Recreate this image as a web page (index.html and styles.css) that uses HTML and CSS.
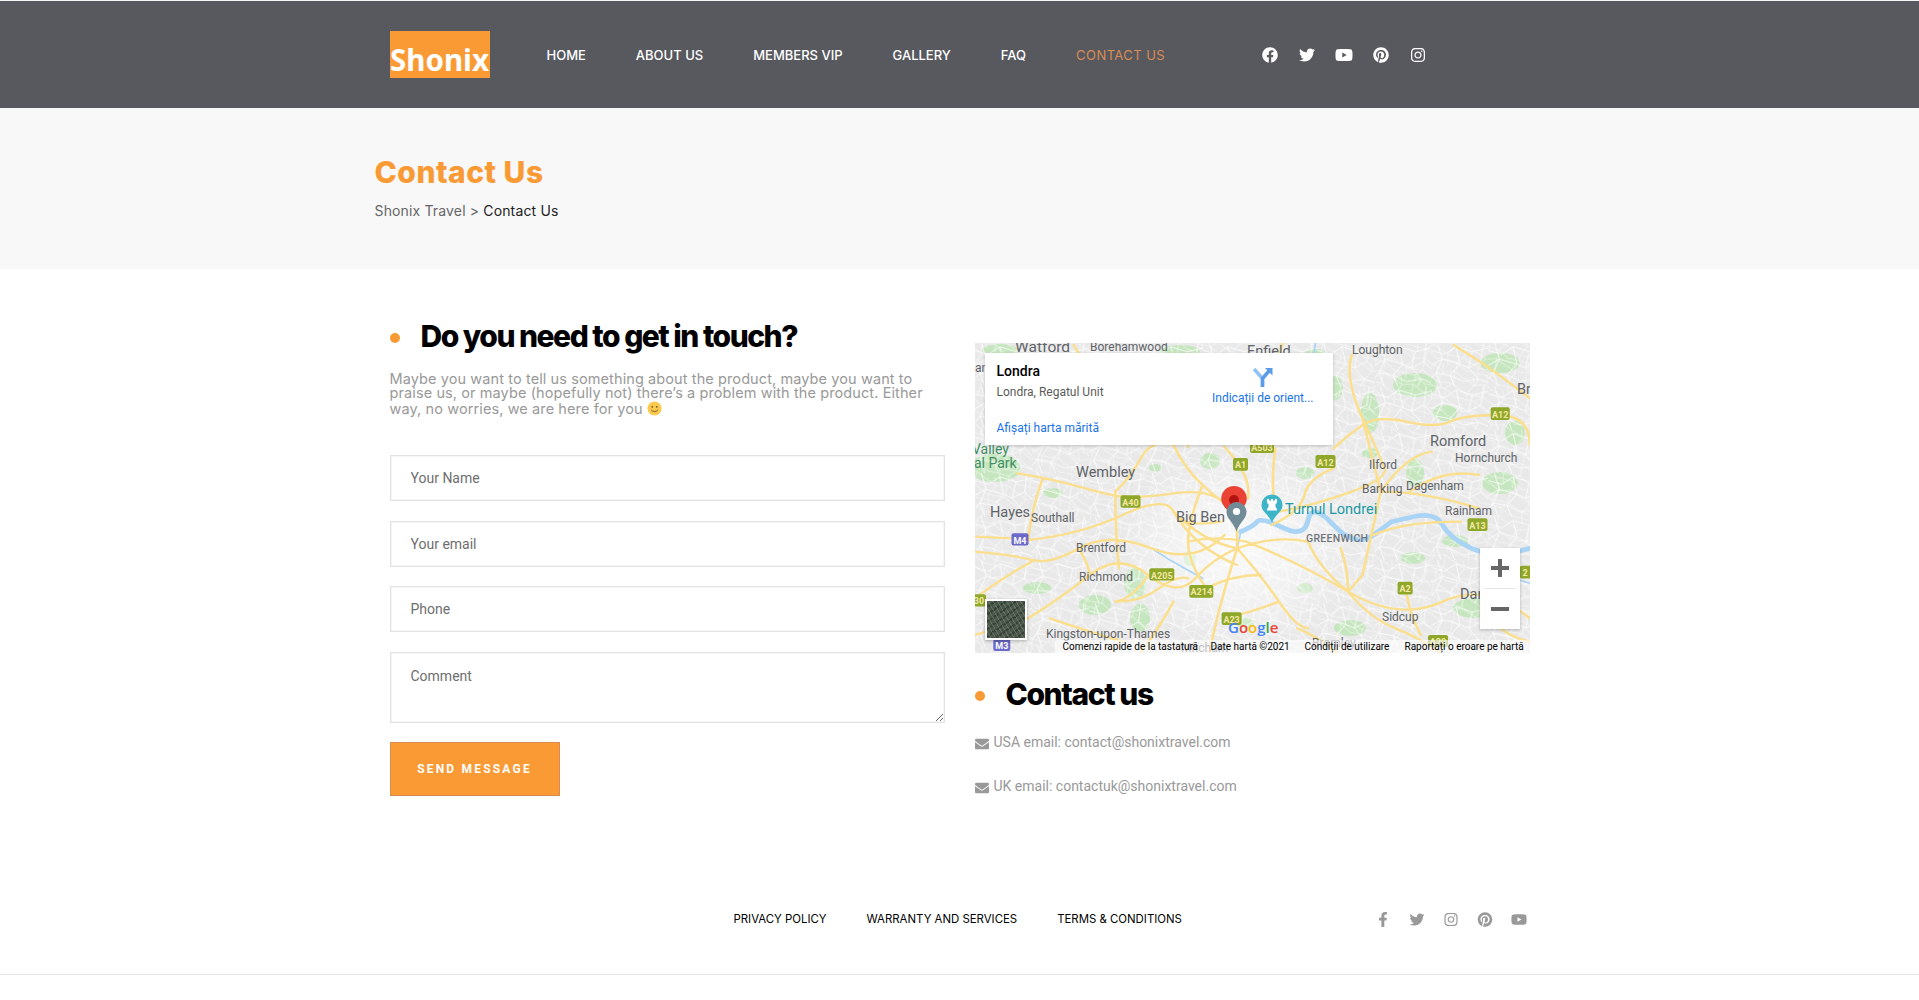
FILE: index.html
```html
<!DOCTYPE html>
<html lang="en">
<head>
    <meta charset="UTF-8">
    <meta name="viewport" content="width=device-width, initial-scale=1.0">
    <title>Contact Us - Shonix Travel</title>
    <link rel="stylesheet" href="styles.css">
</head>
<body>

    <!-- Icon sprite -->
    <svg class="sprite" aria-hidden="true">
        <symbol id="i-facebook" viewBox="0 0 512 512"><path d="M504 256C504 119 393 8 256 8S8 119 8 256c0 123.78 90.69 226.38 209.25 245V327.69h-63V256h63v-54.64c0-62.15 37-96.48 93.67-96.48 27.14 0 55.52 4.84 55.52 4.84v61h-31.28c-30.8 0-40.41 19.12-40.41 38.73V256h68.78l-11 71.69h-57.78V501C413.31 482.38 504 379.78 504 256z"/></symbol>
        <symbol id="i-facebook-f" viewBox="0 0 320 512"><path d="M279.14 288l14.22-92.66h-88.91v-60.13c0-25.35 12.42-50.06 52.24-50.06h40.42V6.26S260.43 0 225.36 0c-73.22 0-121.08 44.38-121.08 124.72v70.62H22.89V288h81.39v224h100.17V288z"/></symbol>
        <symbol id="i-twitter" viewBox="0 0 512 512"><path d="M459.37 151.716c.325 4.548.325 9.097.325 13.645 0 138.72-105.583 298.558-298.558 298.558-59.452 0-114.68-17.219-161.137-47.106 8.447.974 16.568 1.299 25.34 1.299 49.055 0 94.213-16.568 130.274-44.832-46.132-.975-84.792-31.188-98.112-72.772 6.498.974 12.995 1.624 19.818 1.624 9.421 0 18.843-1.3 27.614-3.573-48.081-9.747-84.143-51.98-84.143-102.985v-1.299c13.969 7.797 30.214 12.67 47.431 13.319-28.264-18.843-46.781-51.005-46.781-87.391 0-19.492 5.197-37.36 14.294-52.954 51.655 63.675 129.3 105.258 216.365 109.807-1.624-7.797-2.599-15.918-2.599-24.04 0-57.828 46.782-104.934 104.934-104.934 30.213 0 57.502 12.67 76.67 33.137 23.715-4.548 46.456-13.645 66.599-25.666-7.798 24.366-24.366 44.833-46.132 57.827 21.117-2.273 41.584-8.122 60.426-16.243-14.292 20.791-32.161 39.308-52.628 54.253z"/></symbol>
        <symbol id="i-youtube" viewBox="0 0 576 512"><path d="M549.655 124.083c-6.281-23.65-24.787-42.276-48.284-48.597C458.781 64 288 64 288 64S117.22 64 74.629 75.486c-23.497 6.322-42.003 24.947-48.284 48.597-11.412 42.867-11.412 132.305-11.412 132.305s0 89.438 11.412 132.305c6.281 23.65 24.787 41.5 48.284 47.821C117.22 448 288 448 288 448s170.78 0 213.371-11.486c23.497-6.321 42.003-24.171 48.284-47.821 11.412-42.867 11.412-132.305 11.412-132.305s0-89.438-11.412-132.305zm-317.51 213.508V175.185l142.739 81.205-142.739 81.201z"/></symbol>
        <symbol id="i-pinterest" viewBox="0 0 496 512"><path d="M496 256c0 137-111 248-248 248-25.6 0-50.2-3.9-73.4-11.1 10.1-16.5 25.2-43.5 30.8-65 3-11.6 15.4-59 15.4-59 8.1 15.4 31.7 28.5 56.8 28.5 74.8 0 128.7-68.8 128.7-154.3 0-81.9-66.9-143.2-152.9-143.2-107 0-163.9 71.8-163.9 150.1 0 36.4 19.4 81.7 50.3 96.1 4.7 2.2 7.2 1.2 8.3-3.3.8-3.4 5-20.3 6.9-28.1.6-2.5.3-4.7-1.7-7.1-10.1-12.5-18.3-35.3-18.3-56.6 0-54.7 41.4-107.6 112-107.6 60.9 0 103.6 41.5 103.6 100.9 0 67.1-33.9 113.6-78 113.6-24.3 0-42.6-20.1-36.7-44.8 7-29.5 20.5-61.3 20.5-82.6 0-19-10.2-34.9-31.4-34.9-24.9 0-44.9 25.7-44.9 60.2 0 22 7.4 36.8 7.4 36.8s-24.5 103.8-29 123.2c-5 21.4-3 51.6-.9 71.2C65.4 450.9 0 361.1 0 256 0 119 111 8 248 8s248 111 248 248z"/></symbol>
        <symbol id="i-instagram" viewBox="0 0 448 512"><path d="M224.1 141c-63.6 0-114.9 51.3-114.9 114.9s51.3 114.9 114.9 114.9S339 319.5 339 255.9 287.7 141 224.1 141zm0 189.6c-41.1 0-74.7-33.5-74.7-74.7s33.5-74.7 74.7-74.7 74.7 33.5 74.7 74.7-33.6 74.7-74.7 74.7zm146.4-194.3c0 14.9-12 26.8-26.8 26.8-14.9 0-26.8-12-26.8-26.8s12-26.8 26.8-26.8 26.8 12 26.8 26.8zm76.1 27.2c-1.7-35.9-9.9-67.7-36.2-93.9-26.2-26.2-58-34.4-93.9-36.2-37-2.1-147.9-2.1-184.9 0-35.8 1.7-67.6 9.9-93.9 36.1s-34.4 58-36.2 93.9c-2.1 37-2.1 147.9 0 184.9 1.7 35.9 9.9 67.7 36.2 93.9s58 34.4 93.9 36.2c37 2.1 147.9 2.1 184.9 0 35.9-1.7 67.7-9.9 93.9-36.2 26.2-26.2 34.4-58 36.2-93.9 2.1-37 2.1-147.8 0-184.8zM398.8 388c-7.8 19.6-22.9 34.7-42.6 42.6-29.5 11.7-99.5 9-132.1 9s-102.7 2.6-132.1-9c-19.6-7.8-34.7-22.9-42.6-42.6-11.7-29.5-9-99.5-9-132.1s-2.6-102.7 9-132.1c7.8-19.6 22.9-34.7 42.6-42.6 29.5-11.7 99.5-9 132.1-9s102.7-2.6 132.1 9c19.6 7.8 34.7 22.9 42.6 42.6 11.7 29.5 9 99.5 9 132.1s2.7 102.7-9 132.1z"/></symbol>
        <symbol id="i-envelope" viewBox="0 0 512 512"><path d="M502.3 190.8c3.9-3.1 9.7-.2 9.7 4.7V400c0 26.5-21.5 48-48 48H48c-26.5 0-48-21.5-48-48V195.6c0-5 5.7-7.8 9.7-4.7 22.4 17.4 52.1 39.5 154.1 113.6 21.1 15.4 56.7 47.8 92.2 47.6 35.7.3 72-32.8 92.3-47.6 102-74.1 131.6-96.3 154-113.7zM256 320c23.2.4 56.6-29.2 73.4-41.4 132.7-96.3 142.8-104.7 173.4-128.7 5.8-4.5 9.2-11.5 9.2-18.9v-19c0-26.5-21.5-48-48-48H48C21.5 64 0 85.5 0 112v19c0 7.4 3.4 14.3 9.2 18.9 30.6 23.9 40.7 32.4 173.4 128.7 16.8 12.2 50.2 41.8 73.4 41.4z"/></symbol>
    </svg>

    <!-- Header -->
    <header class="site-header">
        <div class="container header-row">
            <a class="logo" href="#">Shonix</a>
            <nav class="main-nav">
                <a href="#">HOME</a>
                <a href="#">ABOUT US</a>
                <a href="#">MEMBERS VIP</a>
                <a href="#">GALLERY</a>
                <a href="#">FAQ</a>
                <a href="#" class="active">CONTACT US</a>
            </nav>
            <div class="social header-social">
                <a href="#"><svg><use href="#i-facebook"/></svg></a>
                <a href="#"><svg><use href="#i-twitter"/></svg></a>
                <a href="#"><svg><use href="#i-youtube"/></svg></a>
                <a href="#"><svg><use href="#i-pinterest"/></svg></a>
                <a href="#"><svg><use href="#i-instagram"/></svg></a>
            </div>
        </div>
    </header>

    <!-- Page title -->
    <section class="page-title">
        <div class="title-inner">
            <h1>Contact Us</h1>
            <div class="breadcrumb">Shonix Travel &gt; <span>Contact Us</span></div>
        </div>
    </section>

    <!-- Contact -->
    <main class="container contact-grid">
        <div class="col-form">
            <h2 class="dot-title">Do you need to get in touch?</h2>
            <p class="intro">Maybe you want to tell us something about the product, maybe you want to<br>praise us, or maybe (hopefully not) there’s a problem with the product. Either<br>way, no worries, we are here for you <svg class="smile" viewBox="0 0 16 16"><circle cx="8" cy="8" r="7.5" fill="#fcc84e"/><circle cx="5.6" cy="6.2" r="1" fill="#6b5a2a"/><circle cx="10.4" cy="6.2" r="1" fill="#6b5a2a"/><path d="M4.4 9.6Q8 13 11.6 9.6" fill="none" stroke="#6b5a2a" stroke-width="1"/></svg></p>
            <form class="contact-form">
                <input type="text" placeholder="Your Name">
                <input type="email" placeholder="Your email">
                <input type="text" placeholder="Phone">
                <textarea placeholder="Comment"></textarea>
                <button type="button" class="send-btn">SEND MESSAGE</button>
            </form>
        </div>

        <div class="col-info">
            <div class="map">
                <svg class="map-canvas" viewBox="0 0 555 310">
                    <defs>
                        <pattern id="streets" width="92" height="70" patternUnits="userSpaceOnUse" patternTransform="scale(.62)">
                            <path d="M0 12L22 18L40 6L66 14L92 8M10 0L18 26L8 48L16 70M40 6L46 34L30 52L38 70M66 14L60 40L76 58L70 70M84 0L80 30L92 42M0 36L18 26L46 34L60 40L80 30M0 58L8 48L30 52L52 62L76 58L92 64" fill="none" stroke="#fff" stroke-width="1.500"/>
                        </pattern>
                        <pattern id="streets-fine" width="60" height="52" patternUnits="userSpaceOnUse" patternTransform="rotate(24) scale(.55)">
                            <path d="M0 8L20 14L38 4L60 10M12 0L20 14L14 34L22 52M38 4L44 26L34 40L40 52M0 30L14 34L44 26L60 32M0 46L34 40L60 48" fill="none" stroke="#fff" stroke-width="1.400"/>
                        </pattern>
                        <radialGradient id="city">
                            <stop offset="0" stop-color="#fff" stop-opacity=".75"/>
                            <stop offset=".6" stop-color="#fff" stop-opacity=".35"/>
                            <stop offset="1" stop-color="#fff" stop-opacity="0"/>
                        </radialGradient>
                    </defs>
                    <rect width="555" height="310" fill="#e9e9e9"/>
                    <g fill="#c6e6bf">
                        <ellipse cx="25" cy="8" rx="18" ry="7"/><ellipse cx="205" cy="8" rx="20" ry="6"/>
                        <ellipse cx="340" cy="14" rx="14" ry="8"/><ellipse cx="360" cy="45" rx="8" ry="12"/>
                        <ellipse cx="440" cy="42" rx="22" ry="12"/><ellipse cx="470" cy="70" rx="12" ry="8"/>
                        <ellipse cx="525" cy="20" rx="20" ry="10"/><ellipse cx="395" cy="70" rx="9" ry="20"/>
                        <ellipse cx="20" cy="125" rx="26" ry="14"/><ellipse cx="78" cy="150" rx="10" ry="5"/>
                        <ellipse cx="440" cy="130" rx="9" ry="14"/><ellipse cx="395" cy="110" rx="8" ry="5"/>
                        <ellipse cx="525" cy="140" rx="18" ry="11"/><ellipse cx="235" cy="118" rx="10" ry="8"/>
                        <ellipse cx="180" cy="125" rx="6" ry="4"/><ellipse cx="160" cy="240" rx="11" ry="16"/>
                        <ellipse cx="165" cy="275" rx="10" ry="14"/><ellipse cx="120" cy="262" rx="16" ry="10"/>
                        <ellipse cx="438" cy="215" rx="12" ry="6"/><ellipse cx="500" cy="265" rx="22" ry="10"/>
                        <ellipse cx="375" cy="285" rx="16" ry="8"/><ellipse cx="62" cy="245" rx="14" ry="6"/>
                        <ellipse cx="330" cy="130" rx="9" ry="6"/><ellipse cx="480" cy="198" rx="13" ry="6"/>
                        <ellipse cx="270" cy="280" rx="9" ry="5"/><ellipse cx="215" cy="215" rx="6" ry="8"/>
                        <ellipse cx="330" cy="245" rx="8" ry="5"/><ellipse cx="540" cy="90" rx="10" ry="12"/>
                    </g>
                    <rect width="555" height="310" fill="url(#streets)" opacity=".85"/>
                    <rect width="555" height="310" fill="url(#streets-fine)" opacity=".6"/>
                    <ellipse cx="262" cy="205" rx="120" ry="95" fill="url(#city)"/>
                    <g transform="translate(-5.09 -8) scale(.3636 .3333)" fill="none" stroke-linecap="round" stroke-linejoin="round">
                        <path d="M1540 640Q1440 670 1380 640T1300 570T1220 545T1160 560T1110 600T1000 570T930 555T860 578T790 560T745 590" stroke="#a9d4f6" stroke-width="14"/>
                        <path d="M745 590L735 640M500 640Q540 670 590 700T640 730M950 24L945 70M1510 735L1540 745" stroke="#a9d4f6" stroke-width="5"/>
                        <path d="M130 415Q220 430 300 455T420 485T560 475T700 505M14 605L115 610M160 615Q300 600 420 540T560 530T690 560M14 650Q120 660 170 675T300 640T500 640T700 600M170 680Q100 720 14 790M160 850Q250 790 330 720T490 720T620 730T735 640M400 800Q470 800 520 760T600 730M735 640L735 600L733 560M735 640Q700 760 680 850T660 953M735 640Q800 720 850 800T930 880M760 620Q900 680 1040 770T1300 800T1540 850M1040 770Q1100 850 1170 880T1290 950M840 340Q830 420 835 480M745 400Q770 440 765 490M560 330Q590 400 640 450T700 500M1000 400Q930 430 920 480T830 570M850 530Q950 510 1050 470T1140 400T1080 250T1050 60M1000 340Q1040 300 1080 270T1200 260T1320 260T1450 240T1540 330M1330 30Q1420 90 1480 140T1540 190M1080 250L1100 340L1130 470L1100 620L1080 720L1040 770M1020 640Q1040 700 1040 770M400 470Q440 430 470 370T560 330M400 470Q400 600 410 700M1110 600Q1190 560 1350 560M285 30L300 55M860 24L850 60M500 120Q600 260 600 335M700 335Q730 370 745 400M640 450Q600 560 600 620T650 760M735 640Q640 620 560 530M735 640Q840 600 930 620M1130 470Q1250 470 1400 520M1200 770Q1210 840 1240 900M1430 840Q1460 900 1540 920M600 620Q680 600 760 620M650 760Q720 720 800 720M560 530Q620 640 735 690M850 800Q780 830 700 850M930 620Q960 700 1040 770M220 850Q300 880 420 920M560 800Q520 880 470 953M900 880Q950 900 1010 953M1130 470Q1200 360 1270 350M1210 470Q1300 400 1400 420M200 430Q170 520 160 615M300 640Q330 700 330 720M490 720Q450 790 400 800M14 900Q80 880 160 850" stroke="#fbdf8c" stroke-width="7"/>
                    </g>
                    <g class="shield">
                        <rect x="515.7" y="64.3" width="19" height="12.7" rx="2"/><rect x="340.5" y="112" width="20" height="13" rx="2"/>
                        <rect x="258" y="115" width="15" height="12.7" rx="2"/><rect x="275" y="97" width="24" height="13" rx="2"/>
                        <rect x="145.5" y="152.3" width="20" height="12.5" rx="2"/><rect x="492.5" y="175.3" width="20" height="12.7" rx="2"/>
                        <rect x="174.3" y="225.3" width="25" height="12.3" rx="2"/><rect x="214.3" y="242" width="24" height="12.7" rx="2"/>
                        <rect x="422.6" y="238.7" width="15" height="12.7" rx="2"/><rect x="246.6" y="269.3" width="20" height="12.7" rx="2"/>
                        <rect x="453" y="292" width="20" height="12" rx="2"/><rect x="544.8" y="222.7" width="12" height="12.7" rx="2"/>
                        <rect x="-4" y="251.3" width="15" height="12.3" rx="2"/>
                        <rect class="moto" x="36.5" y="190.3" width="17" height="12.3" rx="2"/><rect class="moto" x="18.3" y="296" width="17" height="12" rx="2"/>
                        <text x="525.2" y="74.5">A12</text><text x="350.5" y="122.5">A12</text><text x="265.5" y="125">A1</text><text x="287" y="107.5">A503</text>
                        <text x="155.5" y="162.5">A40</text><text x="502.5" y="185.5">A13</text><text x="186.8" y="235.5">A205</text><text x="226.3" y="252.3">A214</text>
                        <text x="430" y="249">A2</text><text x="256.6" y="279.5">A23</text><text x="463" y="302">A20</text><text x="550" y="232.8">2</text><text x="4" y="261">30</text>
                        <text x="45" y="200.5" class="moto-text">M4</text><text x="26.8" y="306" class="moto-text">M3</text>
                    </g>
                    <g class="place">
                        <text x="40" y="9" class="huge">Watford</text><text x="115" y="8">Borehamwood</text>
                        <text x="272" y="13" class="big">Enfield</text><text x="377" y="11">Loughton</text>
                        <text x="542" y="51" class="big">Br</text><text x="0" y="29">an</text>
                        <text x="455" y="103" class="big">Romford</text><text x="480" y="119">Hornchurch</text>
                        <text x="394" y="126">Ilford</text><text x="387" y="150">Barking</text><text x="431" y="147">Dagenham</text>
                        <text x="470" y="172">Rainham</text><text x="101" y="134" class="big">Wembley</text>
                        <text x="15" y="174" class="big">Hayes</text><text x="56" y="179">Southall</text>
                        <text x="201" y="179" class="big">Big Ben</text><text x="101" y="209">Brentford</text>
                        <text x="104" y="238">Richmond</text><text x="71" y="295">Kingston-upon-Thames</text>
                        <text x="407" y="278">Sidcup</text><text x="485" y="256" class="big">Dar</text>
                        <text x="337" y="304">Bromley</text><text x="206" y="309">Mitcham</text>
                        <text x="331" y="199" class="area">GREENWICH</text>
                    </g>
                    <text class="place-green" x="-3" y="111">Valley</text>
                    <text class="place-green" x="-1" y="125">al Park</text>
                    <text class="place-teal" x="310" y="171">Turnul Londrei</text>
                    <!-- Pins -->
                    <path d="M259 143a12.8 12.8 0 0 1 12.8 12.8c0 8-8 11-12.8 20c-4.800-9-12.800-12-12.800-20A12.800 12.800 0 0 1 259 143z" fill="#ea4335"/>
                    <circle cx="259" cy="157" r="5" fill="#b31412"/>
                    <path d="M261.500 159a10 10 0 0 1 10 10c0 7-7 10-10 19.500c-3-9.500-10-12.500-10-19.500A10 10 0 0 1 261.500 159z" fill="#718b97"/>
                    <circle cx="261.500" cy="168.500" r="3.600" fill="#fff"/>
                    <path d="M297 151.500a10.500 10.500 0 0 1 10.500 10.500c0 7-7 9-10.500 17.500c-3.500-8.500-10.500-10.500-10.500-17.500A10.500 10.500 0 0 1 297 151.500z" fill="#3db4c8"/>
                    <path d="M292 156h2v1.500h2V156h2v1.500h2V156h2v4l-1.500 1v3l1.500 2v1.500h-10V166l1.500-2v-3l-1.500-1z" fill="#fff"/>
                    <text class="google" x="253" y="290"><tspan fill="#4285f4">G</tspan><tspan fill="#ea4335">o</tspan><tspan fill="#fbbc05">o</tspan><tspan fill="#4285f4">g</tspan><tspan fill="#34a853">l</tspan><tspan fill="#ea4335">e</tspan></text>
                </svg>

                <div class="map-card">
                    <div class="map-card-info">
                        <div class="map-place">Londra</div>
                        <div class="map-address">Londra, Regatul Unit</div>
                        <a href="#" class="map-link map-larger">Afișați harta mărită</a>
                    </div>
                    <a href="#" class="map-directions">
                        <svg viewBox="0 0 20 20"><path d="M1 2L9.500 11.500V20" fill="none" stroke="#90c2f4" stroke-width="3.500"/><path d="M9.500 20V11.500L16 4" fill="none" stroke="#5c9bea" stroke-width="3.500"/><path d="M12 1H19.500V8.500z" fill="#5c9bea"/></svg>
                        <span class="map-link">Indicații de orient...</span>
                    </a>
                </div>

                <div class="map-zoom">
                    <button type="button" class="zoom-btn"><svg viewBox="0 0 18 18"><path d="M7 0h4v7h7v4h-7v7H7v-7H0V7h7z"/></svg></button>
                    <button type="button" class="zoom-btn"><svg viewBox="0 0 18 18"><path d="M0 7h18v4H0z"/></svg></button>
                </div>
                <div class="map-thumb"></div>

                <div class="map-attr">
                    <span class="attr-keys">Comenzi rapide de la tastatură</span>
                    <span class="attr-data">Date hartă ©2021</span>
                    <span class="attr-terms">Condiții de utilizare</span>
                    <span>Raportați o eroare pe hartă</span>
                </div>
            </div>

            <h2 class="dot-title contact-title">Contact us</h2>
            <div class="email-row"><svg><use href="#i-envelope"/></svg>USA email: contact@shonixtravel.com</div>
            <div class="email-row"><svg><use href="#i-envelope"/></svg>UK email: contactuk@shonixtravel.com</div>
        </div>
    </main>

    <!-- Footer -->
    <footer class="site-footer">
        <div class="container footer-row">
            <nav class="footer-nav">
                <a href="#">PRIVACY POLICY</a>
                <a href="#">WARRANTY AND SERVICES</a>
                <a href="#">TERMS &amp; CONDITIONS</a>
            </nav>
            <div class="social footer-social">
                <a href="#"><svg><use href="#i-facebook-f"/></svg></a>
                <a href="#"><svg><use href="#i-twitter"/></svg></a>
                <a href="#"><svg><use href="#i-instagram"/></svg></a>
                <a href="#"><svg><use href="#i-pinterest"/></svg></a>
                <a href="#"><svg><use href="#i-youtube"/></svg></a>
            </div>
        </div>
    </footer>

</body>
</html>
```

FILE: styles.css
```css
* {
    margin: 0;
    padding: 0;
    box-sizing: border-box;
}
body {
    background: #fff;
    font-family: Inter, "Noto Sans", sans-serif;
    color: #000;
}
a {
    color: inherit;
    text-decoration: none;
}
.sprite {
    display: none;
}
.container {
    width: 1170px;
    margin: 0 auto;
    padding: 0 15px;
}

/* Header */
.site-header {
    height: 108px;
    background: #58595f;
    border-top: 1px solid #f4f4f4;
}
.header-row {
    display: flex;
    align-items: center;
    height: 107px;
}
.logo {
    display: flex;
    align-items: flex-end;
    justify-content: center;
    width: 100px;
    height: 47px;
    margin-top: -1px;
    background: #fa9a34;
    color: #fff;
    font-family: "Noto Sans", sans-serif;
    font-size: 29.5px;
    font-weight: 700;
    line-height: 37px;
}
.main-nav {
    display: flex;
    gap: 50px;
    margin-left: 57px;
    font-size: 13px;
    font-weight: 500;
    color: #fff;
    white-space: nowrap;
}
.main-nav .active {
    color: #d98b54;
    font-weight: 400;
    letter-spacing: .45px;
}
.social {
    display: flex;
    align-items: center;
}
.social a {
    display: flex;
}
.header-social {
    gap: 19px;
    margin-left: 96px;
    color: #fff;
}
.header-social svg {
    width: 18px;
    height: 16px;
    fill: currentColor;
}

/* Page title */
.page-title {
    height: 161px;
    background: #f8f8f8;
}
.title-inner {
    width: 1170px;
    margin: 0 auto;
    padding-top: 45px;
}
.page-title h1 {
    font-size: 30px;
    font-weight: 800;
    line-height: 38px;
    letter-spacing: .5px;
    color: #fa9a34;
}
.breadcrumb {
    margin-top: 10px;
    font-size: 14px;
    line-height: 20px;
    letter-spacing: .15px;
    color: #666;
}
.breadcrumb span {
    color: #222;
}

/* Contact columns */
.contact-grid {
    display: grid;
    grid-template-columns: 555px 555px;
    column-gap: 30px;
}
.col-form {
    padding-top: 47px;
}
.col-info {
    padding-top: 74px;
}
.dot-title {
    position: relative;
    padding-left: 31px;
    font-size: 30px;
    font-weight: 800;
    line-height: 40px;
    letter-spacing: -1.5px;
    color: #000;
}
.contact-title {
    margin-top: 21px;
    letter-spacing: -1.4px;
}
.dot-title::before {
    content: "";
    position: absolute;
    left: 0;
    top: 17px;
    width: 10px;
    height: 10px;
    border-radius: 50%;
    background: #fa9a34;
}
.intro {
    height: 43px;
    margin-top: 16px;
    font-size: 14.5px;
    line-height: 14.3px;
    letter-spacing: .1px;
    color: #999;
    white-space: nowrap;
}
.smile {
    width: 15px;
    height: 15px;
    vertical-align: -2px;
}

/* Form */
.contact-form {
    display: flex;
    flex-direction: column;
    align-items: flex-start;
    gap: 19.5px;
    margin-top: 40px;
}
.contact-form input,
.contact-form textarea {
    display: block;
    width: 100%;
    height: 46px;
    padding: 0 20px;
    border: 1px solid #e2e2e2;
    box-shadow: inset 0 0 0 .5px #eee;
    background: #fff;
    font-family: Roboto, sans-serif;
    font-size: 14px;
    outline: none;
}
.contact-form textarea {
    height: 71px;
    padding-top: 15px;
    line-height: 16px;
}
.contact-form ::placeholder {
    color: #6e6e6e;
    opacity: 1;
}
.send-btn {
    width: 170px;
    height: 54px;
    border: 1px solid #d98c4f;
    background: #fa9a34;
    color: #fff;
    font-family: Roboto, sans-serif;
    font-size: 12px;
    font-weight: 700;
    letter-spacing: 2.2px;
}

/* Map */
.map {
    position: relative;
    width: 555px;
    height: 310px;
    overflow: hidden;
}
.map-canvas {
    display: block;
    width: 555px;
    height: 310px;
    font-family: Roboto, sans-serif;
}
.place text {
    font-size: 12px;
    fill: #5f6368;
}
.place .big {
    font-size: 14.5px;
}
.place .huge {
    font-size: 15.5px;
}
.place .area {
    font-size: 10.5px;
    font-weight: 500;
    letter-spacing: .3px;
    fill: #70757a;
}
.place-green {
    font-size: 14px;
    fill: #3f8f63;
}
.place-teal {
    font-size: 14.5px;
    fill: #1c98a6;
}
.shield rect {
    fill: #8fa82a;
}
.shield .moto {
    fill: #6b69c9;
}
.shield text {
    font-size: 9px;
    font-weight: 700;
    text-anchor: middle;
    fill: #f4e7a6;
}
.shield .moto-text {
    fill: #fff;
}
.google {
    font-family: "Open Sans", sans-serif;
    font-size: 15px;
    font-weight: 600;
}
.map-card {
    position: absolute;
    left: 10px;
    top: 10px;
    display: flex;
    justify-content: space-between;
    width: 348px;
    height: 92px;
    padding: 10px 19px 0 12px;
    background: #fff;
    box-shadow: 0 1px 3px rgba(0, 0, 0, .2);
    font-family: Roboto, sans-serif;
}
.map-place {
    font-size: 14px;
    font-weight: 500;
    line-height: 16px;
}
.map-address {
    margin-top: 5px;
    font-size: 12px;
    line-height: 16px;
    color: #5b5b5b;
}
.map-link {
    font-size: 12px;
    line-height: 16px;
    color: #1a73e8;
}
.map-larger {
    display: block;
    margin-top: 20px;
}
.map-directions {
    display: flex;
    flex-direction: column;
    align-items: center;
    gap: 3px;
    padding-top: 4px;
}
.map-directions svg {
    width: 20px;
    height: 20px;
}
.map-zoom {
    position: absolute;
    right: 10px;
    top: 205px;
    display: flex;
    flex-direction: column;
    width: 40px;
    height: 81px;
    background: #fff;
    box-shadow: 0 1px 3px rgba(0, 0, 0, .25);
}
.zoom-btn {
    display: flex;
    align-items: center;
    justify-content: center;
    flex: 1;
    border: none;
    background: none;
}
.zoom-btn + .zoom-btn {
    margin: 0 4px;
    border-top: 1px solid #e6e6e6;
}
.zoom-btn svg {
    width: 18px;
    height: 18px;
    fill: #666;
}
.map-thumb {
    position: absolute;
    left: 10px;
    top: 256px;
    width: 42px;
    height: 41px;
    border: 2px solid #fff;
    box-shadow: 0 1px 3px rgba(0, 0, 0, .3);
    background:
        repeating-linear-gradient(60deg, transparent 0 3px, rgba(170, 180, 165, .28) 3px 4px),
        repeating-linear-gradient(-35deg, transparent 0 4px, rgba(20, 30, 20, .35) 4px 6px),
        #4a574a;
}
.map-attr {
    position: absolute;
    left: 80px;
    right: 0;
    bottom: 0;
    display: flex;
    align-items: center;
    height: 13px;
    padding-left: 8px;
    background: rgba(255, 255, 255, .6);
    font-family: Roboto, sans-serif;
    font-size: 10px;
    line-height: 13px;
    color: #000;
    white-space: nowrap;
}
.attr-keys {
    width: 148px;
}
.attr-data {
    width: 94px;
}
.attr-terms {
    width: 100px;
}

/* Contact details */
.email-row {
    display: flex;
    align-items: center;
    height: 20px;
    margin-top: 24px;
    font-family: Roboto, sans-serif;
    font-size: 14px;
    color: #999;
}
.contact-title + .email-row {
    margin-top: 18px;
}
.email-row svg {
    width: 14px;
    height: 14px;
    margin: 3px 5px 0 0;
    fill: #999;
}

/* Footer */
.site-footer {
    margin-top: 111px;
    padding-bottom: 43px;
    border-bottom: 1px solid #e8e8e8;
}
.footer-row {
    display: flex;
    align-items: center;
    height: 24px;
}
.footer-nav {
    display: flex;
    gap: 40px;
    margin-left: 344px;
    font-size: 11.4px;
    font-weight: 400;
    color: #000;
    white-space: nowrap;
}
.footer-social {
    gap: 18px;
    margin-left: auto;
    margin-right: 3px;
    color: #999;
}
.footer-social svg {
    width: 16px;
    height: 15px;
    fill: currentColor;
}
```
